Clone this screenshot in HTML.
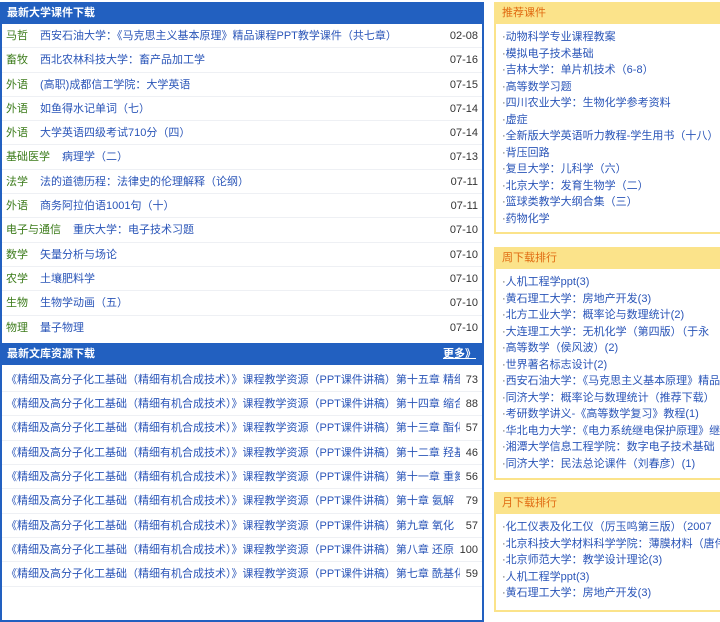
<!DOCTYPE html>
<html><head><meta charset="utf-8"><style>
*{margin:0;padding:0;box-sizing:border-box}
body{width:720px;height:591px;overflow:hidden;background:#fff;font:11px "Liberation Sans","Noto Sans CJK SC",sans-serif;position:relative}
a{color:#2a55b8;text-decoration:none}
.L{position:absolute;left:0;top:2px;width:484px;border:2px solid #2260c0;border-top:0;height:620px}
.h{background:#2260c0;color:#fff;font-weight:bold;height:22px;line-height:22px;padding-left:5px;font-size:11px;position:relative}
.h .m{position:absolute;right:6px;top:0;color:#fff;text-decoration:underline}
.row{height:24.3px;line-height:24px;border-bottom:1px solid #eef0f4;padding-left:4px;position:relative;white-space:nowrap;overflow:hidden}
.c{color:#3a7a18;margin-right:12px}
.d{position:absolute;right:4px;top:0;color:#333;background:#fff;padding-left:6px}
.R{position:absolute;left:494px;width:240px;border:2px solid #fbe38a;border-top:0}
.rh{background:#fbe38a;color:#e06a10;height:22px;line-height:22px;padding-left:6px;font-size:11px}
.R ul{list-style:none;padding:5px 0 4px 6px}
.R li{height:16.5px;line-height:16.5px;white-space:nowrap;overflow:hidden;color:#555}
</style></head><body>
<div class="L">
<div class="h">最新大学课件下载</div>
<div class="row"><span class="c">马哲</span><a>西安石油大学：《马克思主义基本原理》精品课程PPT教学课件（共七章）</a><span class="d">02-08</span></div>
<div class="row"><span class="c">畜牧</span><a>西北农林科技大学：畜产品加工学</a><span class="d">07-16</span></div>
<div class="row"><span class="c">外语</span><a>(高职)成都信工学院：大学英语</a><span class="d">07-15</span></div>
<div class="row"><span class="c">外语</span><a>如鱼得水记单词（七）</a><span class="d">07-14</span></div>
<div class="row"><span class="c">外语</span><a>大学英语四级考试710分（四）</a><span class="d">07-14</span></div>
<div class="row"><span class="c">基础医学</span><a>病理学（二）</a><span class="d">07-13</span></div>
<div class="row"><span class="c">法学</span><a>法的道德历程：法律史的伦理解释（论纲）</a><span class="d">07-11</span></div>
<div class="row"><span class="c">外语</span><a>商务阿拉伯语1001句（十）</a><span class="d">07-11</span></div>
<div class="row"><span class="c">电子与通信</span><a>重庆大学：电子技术习题</a><span class="d">07-10</span></div>
<div class="row"><span class="c">数学</span><a>矢量分析与场论</a><span class="d">07-10</span></div>
<div class="row"><span class="c">农学</span><a>土壤肥料学</a><span class="d">07-10</span></div>
<div class="row"><span class="c">生物</span><a>生物学动画（五）</a><span class="d">07-10</span></div>
<div class="row" style="border:0"><span class="c">物理</span><a>量子物理</a><span class="d">07-10</span></div>
<div class="h" style="margin-top:3px">最新文库资源下载<a class="m">更多》</a></div>
<div style="height:3px"></div>
<div class="row"><a>《精细及高分子化工基础（精细有机合成技术）》课程教学资源（PPT课件讲稿）第十五章 精细</a><span class="d">73</span></div>
<div class="row"><a>《精细及高分子化工基础（精细有机合成技术）》课程教学资源（PPT课件讲稿）第十四章 缩合</a><span class="d">88</span></div>
<div class="row"><a>《精细及高分子化工基础（精细有机合成技术）》课程教学资源（PPT课件讲稿）第十三章 酯化</a><span class="d">57</span></div>
<div class="row"><a>《精细及高分子化工基础（精细有机合成技术）》课程教学资源（PPT课件讲稿）第十二章 羟基</a><span class="d">46</span></div>
<div class="row"><a>《精细及高分子化工基础（精细有机合成技术）》课程教学资源（PPT课件讲稿）第十一章 重氮</a><span class="d">56</span></div>
<div class="row"><a>《精细及高分子化工基础（精细有机合成技术）》课程教学资源（PPT课件讲稿）第十章 氨解</a><span class="d">79</span></div>
<div class="row"><a>《精细及高分子化工基础（精细有机合成技术）》课程教学资源（PPT课件讲稿）第九章 氧化</a><span class="d">57</span></div>
<div class="row"><a>《精细及高分子化工基础（精细有机合成技术）》课程教学资源（PPT课件讲稿）第八章 还原</a><span class="d">100</span></div>
<div class="row"><a>《精细及高分子化工基础（精细有机合成技术）》课程教学资源（PPT课件讲稿）第七章 酰基化</a><span class="d">59</span></div>
</div>

<div class="R" style="top:2px;height:232px"><div class="rh">推荐课件</div><ul>
<li>·<a>动物科学专业课程教案</a></li><li>·<a>模拟电子技术基础</a></li><li>·<a>吉林大学：单片机技术（6-8）</a></li><li>·<a>高等数学习题</a></li><li>·<a>四川农业大学：生物化学参考资料</a></li><li>·<a>虚症</a></li><li>·<a>全新版大学英语听力教程-学生用书（十八）</a></li><li>·<a>背压回路</a></li><li>·<a>复旦大学：儿科学（六）</a></li><li>·<a>北京大学：发育生物学（二）</a></li><li>·<a>篮球类教学大纲合集（三）</a></li><li>·<a>药物化学</a></li></ul></div>

<div class="R" style="top:247px;height:233px"><div class="rh">周下载排行</div><ul>
<li>·<a>人机工程学ppt(3)</a></li><li>·<a>黄石理工大学：房地产开发(3)</a></li><li>·<a>北方工业大学：概率论与数理统计(2)</a></li><li>·<a>大连理工大学：无机化学（第四版）（于永</a></li><li>·<a>高等数学（侯风波）(2)</a></li><li>·<a>世界著名标志设计(2)</a></li><li>·<a>西安石油大学：《马克思主义基本原理》精品</a></li><li>·<a>同济大学：概率论与数理统计（推荐下载）</a></li><li>·<a>考研数学讲义-《高等数学复习》教程(1)</a></li><li>·<a>华北电力大学：《电力系统继电保护原理》继</a></li><li>·<a>湘潭大学信息工程学院：数字电子技术基础</a></li><li>·<a>同济大学：民法总论课件（刘春彦）(1)</a></li></ul></div>

<div class="R" style="top:492px;height:120px"><div class="rh">月下载排行</div><ul>
<li>·<a>化工仪表及化工仪（厉玉鸣第三版）（2007</a></li><li>·<a>北京科技大学材料科学学院：薄膜材料（唐伟</a></li><li>·<a>北京师范大学：教学设计理论(3)</a></li><li>·<a>人机工程学ppt(3)</a></li><li>·<a>黄石理工大学：房地产开发(3)</a></li></ul></div>
</body></html>
